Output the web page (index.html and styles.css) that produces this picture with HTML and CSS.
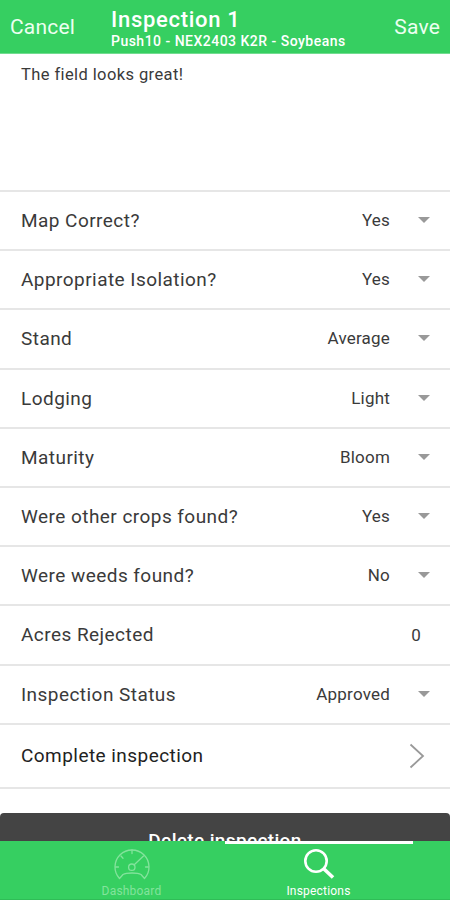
FILE: index.html
```
<!DOCTYPE html>
<html lang="en">
<head>
<meta charset="utf-8">
<title>Inspection 1</title>
<link rel="stylesheet" href="styles.css">
</head>
<body>
<div class="app">
  <header class="topbar">
    <span class="action cancel">Cancel</span>
    <div class="heading">
      <h1>Inspection 1</h1>
      <p>Push10 - NEX2403 K2R - Soybeans</p>
    </div>
    <span class="action save">Save</span>
  </header>
  <main class="content">
    <div class="notes">The field looks great!</div>
    <div class="row"><span class="label">Map Correct?</span><span class="value">Yes</span><i class="caret"></i></div>
    <div class="row"><span class="label">Appropriate Isolation?</span><span class="value">Yes</span><i class="caret"></i></div>
    <div class="row"><span class="label">Stand</span><span class="value">Average</span><i class="caret"></i></div>
    <div class="row"><span class="label">Lodging</span><span class="value">Light</span><i class="caret"></i></div>
    <div class="row"><span class="label">Maturity</span><span class="value">Bloom</span><i class="caret"></i></div>
    <div class="row"><span class="label">Were other crops found?</span><span class="value">Yes</span><i class="caret"></i></div>
    <div class="row"><span class="label">Were weeds found?</span><span class="value">No</span><i class="caret"></i></div>
    <div class="row"><span class="label">Acres Rejected</span><span class="value number">0</span></div>
    <div class="row"><span class="label">Inspection Status</span><span class="value">Approved</span><i class="caret"></i></div>
    <div class="row link"><span class="label">Complete inspection</span>
      <svg class="chevron" width="16" height="26" viewBox="0 0 16 26"><path d="M1.5 1.5 14 13 1.5 24.5" fill="none" stroke="#999" stroke-width="1.8"/></svg>
    </div>
    <div class="delete">Delete inspection</div>
  </main>
  <nav class="tabs">
    <div class="tab dashboard">
      <svg width="38" height="34" viewBox="0 0 38 34" fill="none" stroke="currentColor" stroke-width="1.3" stroke-linecap="round" stroke-linejoin="round">
        <path d="M6.5 31.5A17 17 0 1 1 31.500 31.500L28 27.500Q25.500 26 19 26T10 27.500Z"/>
        <circle cx="18.800" cy="20.200" r="3.200"/>
        <path d="M21.200 17.800 30.500 9M19 3v3.500M8 9l2 2.200M2.500 20H5.500M32.500 20h3"/>
      </svg>
      <span>Dashboard</span>
    </div>
    <div class="tab inspections">
      <svg width="38" height="34" viewBox="0 0 38 34" fill="none" stroke="currentColor">
        <circle cx="16" cy="14" r="10.700" stroke-width="2.600"/>
        <path d="M23.500 21.500 33 30.500" stroke-width="3.600"/>
      </svg>
      <span>Inspections</span>
    </div>
  </nav>
</div>
</body>
</html>
```
FILE: styles.css
```
* { box-sizing: border-box; }
body { margin: 0; font-family: Roboto, "Liberation Sans", sans-serif; color: #3a3a3a; background: #fff; }
.app { width: 450px; height: 900px; display: flex; flex-direction: column; overflow: hidden; }
.topbar { height: 54px; flex: none; background: #36cf61; color: #fff; display: flex; align-items: center; padding: 0 10px; border-bottom: 1px solid #72dc90; }
.action { font-size: 21px; letter-spacing: .2px; color: #ecfff0; }
.cancel { width: 101px; }
.heading { flex: 1; padding-top: 4px; }
.heading h1 { margin: 0; font-size: 22px; line-height: 24px; font-weight: 500; letter-spacing: .7px; }
.heading p { margin: 0; font-size: 14px; line-height: 18px; font-weight: 500; letter-spacing: .48px; white-space: nowrap; }
.content { flex: 1; min-height: 0; overflow: hidden; }
.notes { height: 138px; padding: 11px 21px; font-size: 16.500px; letter-spacing: .4px; line-height: 20px; border-bottom: 2px solid #e6e6e6; }
.row { height: 59.200px; padding: 0 20px 0 21px; display: flex; align-items: center; border-bottom: 2px solid #e6e6e6; }
.label { flex: 1; font-size: 19px; letter-spacing: .45px; }
.value { font-size: 17px; letter-spacing: .2px; padding-bottom: 1px; }
.number { padding-right: 9px; padding-bottom: 0; }
.caret { margin: 0 0 1px 28px; border: 6px solid transparent; border-top-color: #999; border-bottom: 0; }
.link { height: 64px; }
.link .label { color: #222; }
.chevron { margin-right: 5px; }
.delete { margin-top: 24px; height: 56px; background: #444; border-radius: 4px; color: #fff; text-align: center; font-size: 19px; font-weight: 500; letter-spacing: .35px; line-height: 56px; }
.tabs { height: 59px; flex: none; background: #36cf61; display: flex; padding: 0 38px; position: relative; border-bottom: 1px solid #2fbd57; }
.tabs::before { content: ""; position: absolute; left: 225px; top: 0; width: 188px; height: 3px; background: #fff; }
.tab { width: 187px; display: flex; flex-direction: column; align-items: center; padding-top: 6px; font-size: 12px; letter-spacing: .2px; line-height: 16px; }
.tab span { margin-top: 2px; }
.dashboard { color: #83e39c; }
.inspections { color: #fff; }
```
